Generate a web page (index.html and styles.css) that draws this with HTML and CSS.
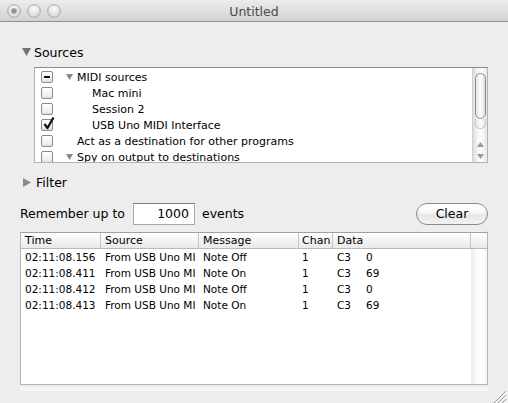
FILE: index.html
```html
<!DOCTYPE html>
<html>
<head>
<meta charset="utf-8">
<title>Untitled</title>
<link rel="stylesheet" href="styles.css">
</head>
<body>
<div class="window">
  <div class="titlebar">
    <div class="lights">
      <svg class="light" width="14" height="14" viewBox="0 0 14 14">
        <defs>
          <radialGradient id="lg" cx="50%" cy="35%" r="65%">
            <stop offset="0" stop-color="#fbfbfb"/>
            <stop offset="1" stop-color="#d6d6d6"/>
          </radialGradient>
          <radialGradient id="dot" cx="50%" cy="50%" r="50%">
            <stop offset="0" stop-color="#7a7a7a"/>
            <stop offset="1" stop-color="#b4b4b4"/>
          </radialGradient>
        </defs>
        <circle cx="7" cy="7" r="6.3" fill="url(#lg)" stroke="#a9a9a9" stroke-width="1"/>
        <circle cx="7" cy="7" r="3" fill="url(#dot)"/>
      </svg>
      <svg class="light" width="14" height="14" viewBox="0 0 14 14">
        <circle cx="7" cy="7" r="6.3" fill="url(#lg)" stroke="#a9a9a9" stroke-width="1"/>
      </svg>
      <svg class="light" width="14" height="14" viewBox="0 0 14 14">
        <circle cx="7" cy="7" r="6.3" fill="url(#lg)" stroke="#a9a9a9" stroke-width="1"/>
      </svg>
    </div>
    <div class="title">Untitled</div>
    <div></div>
  </div>

  <div class="content">
    <div class="disclosure sources-head">
      <svg class="tri-big" width="9" height="8" viewBox="0 0 9 8"><polygon points="0,0 9,0 4.5,8" fill="#737373"/></svg>
      <span>Sources</span>
    </div>

    <div class="srclist">
      <div class="rows">
        <div class="row">
          <span class="check"><svg width="12" height="12" viewBox="0 0 12 12"><rect x="3" y="5" width="6" height="2" fill="#111"/></svg></span>
          <span class="tri"><svg width="7" height="6" viewBox="0 0 7 6"><polygon points="0,0 7,0 3.5,6" fill="#8a8a8a"/></svg></span>
          <span class="label">MIDI sources</span>
        </div>
        <div class="row">
          <span class="check"></span>
          <span class="tri lvl1"></span>
          <span class="label">Mac mini</span>
        </div>
        <div class="row">
          <span class="check"></span>
          <span class="tri lvl1"></span>
          <span class="label">Session 2</span>
        </div>
        <div class="row">
          <span class="check checked"><svg class="tick" width="14" height="15" viewBox="0 0 14 15"><path d="M2.5 8 L5.5 12 L11.5 1.5" fill="none" stroke="#111" stroke-width="2.2" stroke-linejoin="round"/></svg></span>
          <span class="tri lvl1"></span>
          <span class="label">USB Uno MIDI Interface</span>
        </div>
        <div class="row">
          <span class="check"></span>
          <span class="tri"></span>
          <span class="label">Act as a destination for other programs</span>
        </div>
        <div class="row">
          <span class="check"></span>
          <span class="tri"><svg width="7" height="6" viewBox="0 0 7 6"><polygon points="0,0 7,0 3.5,6" fill="#8a8a8a"/></svg></span>
          <span class="label">Spy on output to destinations</span>
        </div>
      </div>
      <div class="vscroll">
        <div class="knob"></div>
        <div class="knob-tail"></div>
        <div class="arrows">
          <svg width="7" height="5" viewBox="0 0 7 5"><polygon points="3.5,0 7,5 0,5" fill="#9a9a9a"/></svg>
          <svg width="7" height="5" viewBox="0 0 7 5"><polygon points="0,0 7,0 3.5,5" fill="#9a9a9a"/></svg>
        </div>
      </div>
    </div>

    <div class="disclosure filter-head">
      <svg class="tri-right" width="8" height="9" viewBox="0 0 8 9"><polygon points="0,0 8,4.5 0,9" fill="#8a8a8a"/></svg>
      <span>Filter</span>
    </div>

    <div class="remember">
      <div class="rem-left">
        <span>Remember up to</span>
        <div class="numbox">1000</div>
        <span class="events-lbl">events</span>
      </div>
      <button class="clear">Clear</button>
    </div>

    <div class="events">
      <div class="ev-main">
        <div class="ev-head">
          <div class="c c-time">Time</div>
          <div class="c c-src">Source</div>
          <div class="c c-msg">Message</div>
          <div class="c c-chan">Chan</div>
          <div class="c c-data">Data</div>
        </div>
        <div class="ev-row">
          <div class="c c-time">02:11:08.156</div>
          <div class="c c-src">From USB Uno MI</div>
          <div class="c c-msg">Note Off</div>
          <div class="c c-chan">1</div>
          <div class="c c-data"><span class="note">C3</span>0</div>
        </div>
        <div class="ev-row">
          <div class="c c-time">02:11:08.411</div>
          <div class="c c-src">From USB Uno MI</div>
          <div class="c c-msg">Note On</div>
          <div class="c c-chan">1</div>
          <div class="c c-data"><span class="note">C3</span>69</div>
        </div>
        <div class="ev-row">
          <div class="c c-time">02:11:08.412</div>
          <div class="c c-src">From USB Uno MI</div>
          <div class="c c-msg">Note Off</div>
          <div class="c c-chan">1</div>
          <div class="c c-data"><span class="note">C3</span>0</div>
        </div>
        <div class="ev-row">
          <div class="c c-time">02:11:08.413</div>
          <div class="c c-src">From USB Uno MI</div>
          <div class="c c-msg">Note On</div>
          <div class="c c-chan">1</div>
          <div class="c c-data"><span class="note">C3</span>69</div>
        </div>
      </div>
      <div class="ev-scroll">
        <div class="corner"></div>
        <div class="track"></div>
      </div>
    </div>
    <div class="statusband"></div>
  </div>

  <svg class="grip" width="16" height="14" viewBox="0 0 16 14">
    <line x1="15" y1="2" x2="3" y2="14" stroke="#9a9a9a" stroke-width="1"/>
    <line x1="15" y1="6" x2="7" y2="14" stroke="#9a9a9a" stroke-width="1"/>
    <line x1="15" y1="10" x2="11" y2="14" stroke="#9a9a9a" stroke-width="1"/>
    <line x1="16" y1="3" x2="4" y2="15" stroke="#ffffff" stroke-width="1"/>
    <line x1="16" y1="7" x2="8" y2="15" stroke="#ffffff" stroke-width="1"/>
  </svg>
</div>
</body>
</html>
```

FILE: styles.css
```css
* { box-sizing: border-box; }

html, body {
  margin: 0;
  padding: 0;
  background: #ededed;
}

body {
  font-family: "DejaVu Sans", "Liberation Sans", sans-serif;
  color: #000;
  width: 508px;
  height: 403px;
  overflow: hidden;
}

.window {
  position: relative;
  width: 508px;
  height: 403px;
  background: #ededed;
}

/* Title bar */
.titlebar {
  height: 22px;
  display: grid;
  grid-template-columns: 1fr auto 1fr;
  align-items: center;
  background: linear-gradient(to bottom, #ececec 0%, #dedede 55%, #d2d2d2 100%);
  border-bottom: 1px solid #8e8e8e;
}

.lights {
  display: flex;
  gap: 6px;
  padding-left: 7px;
  padding-top: 1px;
}

.light { display: block; }

.title {
  font-size: 12.5px;
  color: #4a4a4a;
  padding-top: 1px;
}

/* Content */
.content {
  padding: 0 20px;
}

.disclosure {
  display: flex;
  align-items: center;
  height: 16px;
  font-size: 12.5px;
}

.sources-head {
  margin-top: 22px;
}

.tri-big {
  margin-left: 2px;
  margin-right: 3px;
}

.filter-head {
  margin-top: 11px;
}

.tri-right {
  margin-left: 3px;
  margin-right: 5px;
}

/* Sources list */
.srclist {
  margin-top: 7px;
  margin-left: 14px;
  height: 96px;
  background: #fff;
  border: 1px solid #b4b4b4;
  border-top-color: #8c8c8c;
  display: flex;
  overflow: hidden;
}

.rows {
  flex: 1;
  overflow: hidden;
  padding-top: 1px;
}

.row {
  height: 16px;
  display: flex;
  align-items: center;
  font-size: 11px;
  white-space: nowrap;
}

.check {
  position: relative;
  width: 12px;
  height: 12px;
  margin-left: 6px;
  border: 1px solid #8a8a8a;
  border-radius: 2px;
  background: linear-gradient(to bottom, #ffffff 0%, #f4f4f4 50%, #e2e2e2 100%);
  flex: none;
}

.check svg {
  position: absolute;
  left: -1px;
  top: -1px;
}

.check .tick {
  left: 0px;
  top: -4px;
}

.tri {
  width: 11px;
  margin-left: 13px;
  flex: none;
  display: flex;
  align-items: center;
}

.tri.lvl1 {
  margin-left: 28px;
}

.label {
  line-height: 16px;
  padding-top: 1px;
}

.vscroll {
  width: 15px;
  flex: none;
  display: flex;
  flex-direction: column;
  align-items: center;
  background: linear-gradient(to right, #dcdcdc 0%, #f6f6f6 35%, #fdfdfd 60%, #e6e6e6 100%);
  border-left: 1px solid #d0d0d0;
}

.knob {
  margin-top: 5px;
  width: 11px;
  height: 46px;
  border: 1px solid #8c8c8c;
  border-radius: 6px;
  background: linear-gradient(to right, #e4e4e4 0%, #fcfcfc 45%, #f2f2f2 75%, #d6d6d6 100%);
}

.knob-tail {
  width: 11px;
  height: 10px;
  border: 1px solid #c9c9c9;
  border-top: none;
  border-radius: 0 0 6px 6px;
  background: linear-gradient(to right, #e8e8e8, #fbfbfb, #e8e8e8);
}

.arrows {
  margin-top: auto;
  display: flex;
  flex-direction: column;
  align-items: center;
  gap: 7px;
  padding-bottom: 3px;
}

.arrows svg { display: block; }

/* Remember row */
.remember {
  margin-top: 12px;
  height: 23px;
  display: flex;
  align-items: center;
  justify-content: space-between;
}

.rem-left {
  display: flex;
  align-items: center;
  font-size: 12.5px;
}

.numbox {
  margin-left: 8px;
  width: 62px;
  height: 22px;
  background: #fff;
  border: 1px solid #a8a8a8;
  border-top-color: #7f7f7f;
  text-align: right;
  padding-right: 5px;
  line-height: 20px;
  font-size: 12.5px;
}

.events-lbl {
  margin-left: 7px;
}

.clear {
  width: 72px;
  height: 22px;
  border: 1px solid #8a8a8a;
  border-radius: 11px;
  background: linear-gradient(to bottom, #ffffff 0%, #f6f6f6 45%, #e6e6e6 55%, #f2f2f2 100%);
  font-family: "DejaVu Sans", "Liberation Sans", sans-serif;
  font-size: 12.5px;
  color: #000;
  padding: 0;
  margin: 0;
  line-height: 20px;
}

/* Events table */
.events {
  margin-top: 7px;
  height: 153px;
  display: flex;
  background: #fff;
  border: 1px solid #b4b4b4;
  border-top-color: #a0a0a0;
  overflow: hidden;
}

.ev-main {
  width: 450px;
  flex: none;
}

.ev-head,
.ev-row {
  display: grid;
  grid-template-columns: 80px 98px 100px 34px 138px;
  height: 16px;
  font-size: 11px;
  white-space: nowrap;
}

.ev-row {
  padding-top: 1px;
  font-size: 10.5px;
}

.ev-head {
  background: linear-gradient(to bottom, #ffffff 0%, #f3f3f3 50%, #e9e9e9 100%);
  border-bottom: 1px solid #b9b9b9;
}

.ev-head .c {
  border-right: 1px solid #c4c4c4;
  line-height: 15px;
}

.c {
  overflow: hidden;
  padding-left: 4px;
  line-height: 15px;
}

.ev-row .c-src { padding-left: 4px; }
.ev-row .c-msg { padding-left: 4px; }
.c-chan { padding-left: 3px; }

.note {
  display: inline-block;
  width: 29px;
}

.ev-scroll {
  flex: 1;
  display: flex;
  flex-direction: column;
}

.corner {
  height: 16px;
  background: linear-gradient(to bottom, #ffffff 0%, #f3f3f3 50%, #e9e9e9 100%);
  border-bottom: 1px solid #b9b9b9;
}

.track {
  flex: 1;
  background: linear-gradient(to right, #ececec 0%, #fbfbfb 35%, #ffffff 70%, #f4f4f4 100%);
}

.statusband {
  margin-top: 2px;
  height: 4px;
  background: #f4f4f4;
}

.grip {
  position: absolute;
  right: 1px;
  bottom: 0;
}
```
